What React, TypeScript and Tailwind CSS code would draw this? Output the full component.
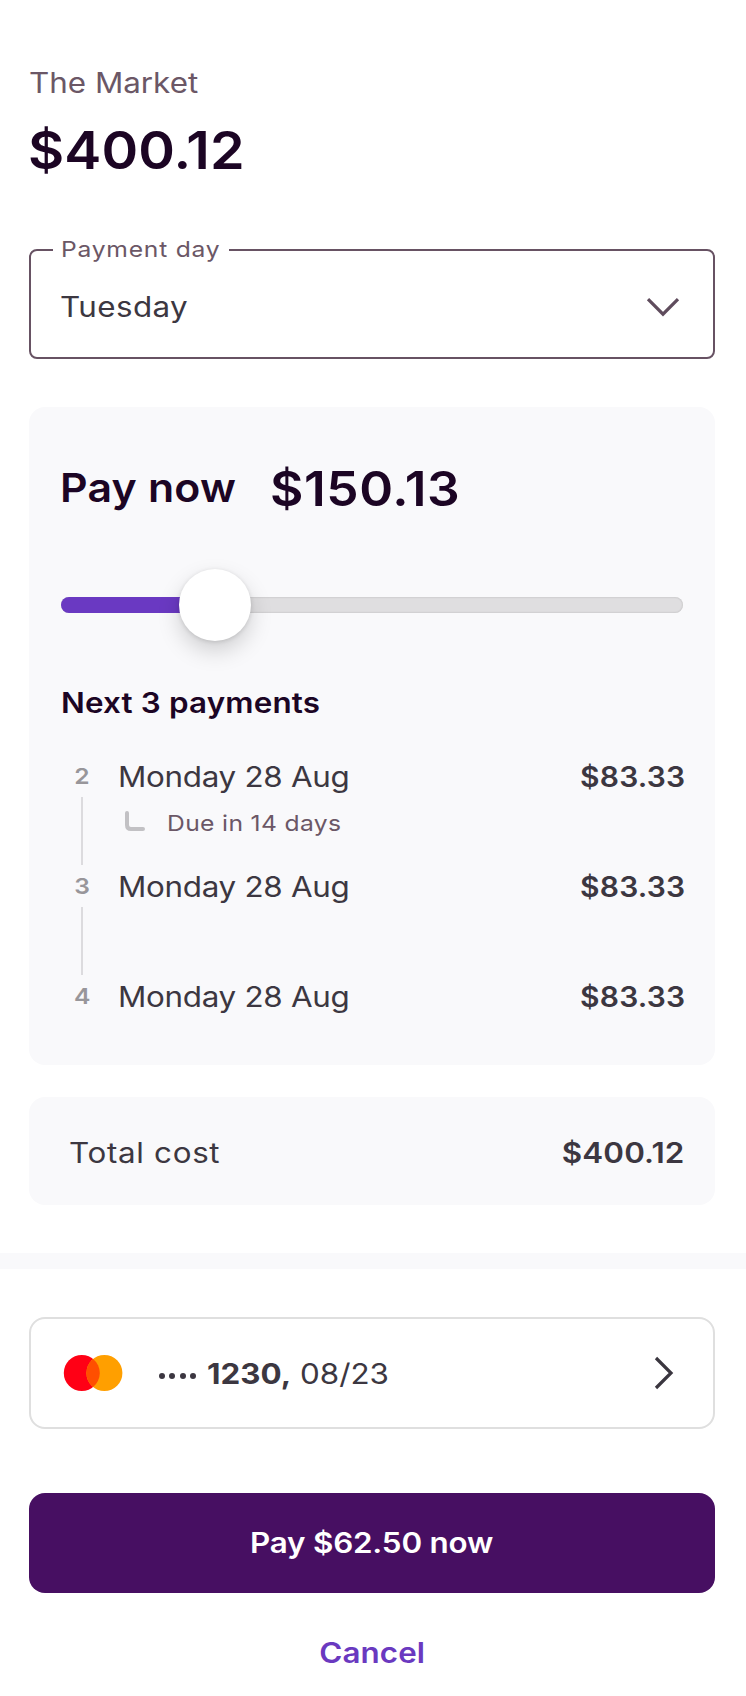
import type { ReactNode } from "react";

type TextProps = { className: string; children: ReactNode };

/* Inter, extended to give the wide grotesque look of the brand face. */
function Wide({ className, children }: TextProps) {
  return (
    <span className={`block origin-left scale-x-[1.12] whitespace-nowrap ${className}`}>{children}</span>
  );
}

/* Large headings and amounts are set a little narrower. */
function Display({ className, children }: TextProps) {
  return (
    <span className={`block origin-left scale-x-[1.07] whitespace-nowrap ${className}`}>{children}</span>
  );
}

function Header() {
  return (
    <header className="pt-[63px]">
      <div className="-ml-[0.5px]">
        <Wide className="text-[28px] leading-10 tracking-[0px] text-[#6b5766]">The Market</Wide>
      </div>
      <h1 className="-ml-px mt-[16px]">
        <Display className="text-[52px] font-semibold leading-[64px] tracking-[0.08px] text-[#1c0524]">$400.12</Display>
      </h1>
    </header>
  );
}

function DaySelect() {
  return (
    <div className="relative mt-[66px] flex h-[110px] items-center justify-between rounded-lg border-2 border-[#675263] pl-[29px] pr-[33px]">
      <div className="absolute -top-4 left-[22px] h-7 w-[176px] bg-white pl-[7.5px]">
        <Wide className="text-[22px] leading-7 tracking-[0.68px] text-[#6b5766]">Payment day</Wide>
      </div>
      <Wide className="mt-1.5 text-[28px] leading-10 tracking-[0.35px] text-[#3c3741]">Tuesday</Wide>
      <svg className="mt-[5px] h-5 w-[34px]" viewBox="0 0 34 20" fill="none" stroke="#5f4c5d" strokeWidth="3.2">
        <path d="M2 2.2 17 17.2 32 2.2" />
      </svg>
    </div>
  );
}

function Slider() {
  return (
    <div className="relative mt-[81px] h-4 w-[622px] rounded-full bg-[#dfdee0] shadow-[inset_0_0_2px_rgba(0,0,0,0.22)]">
      <div className="h-4 w-[154px] rounded-l-full bg-[#6a39c2]" />
      <div className="absolute -top-7 left-[118px] size-[72px] rounded-full bg-white shadow-[0_1px_4px_rgba(0,0,0,0.13),0_10px_22px_rgba(0,0,0,0.17)]" />
    </div>
  );
}

const payments = [
  { step: 2, date: "Monday 28 Aug", amount: "$83.33", due: "Due in 14 days" },
  { step: 3, date: "Monday 28 Aug", amount: "$83.33", due: null },
  { step: 4, date: "Monday 28 Aug", amount: "$83.33", due: null },
];

function Schedule() {
  return (
    <ol className="mt-[34px]">
      {payments.map((p, i) => (
        <li key={p.step} className="flex h-[110px] items-start">
          <div className="flex w-[42px] flex-col items-center">
            <span className="scale-x-[1.12] text-[22px] font-semibold leading-[38px] text-[#98969a]">{p.step}</span>
            {i < payments.length - 1 && <span className="mt-0.5 h-[68px] w-0.5 bg-[#dcdbde]" />}
          </div>
          <div className="ml-[15px]">
            <Wide className="text-[28px] leading-10 tracking-[-0.25px] text-[#3c3741]">{p.date}</Wide>
            {p.due && (
              <div className="mt-[12px] flex pl-[7px]">
                <svg className="mt-[2px] size-5" viewBox="0 0 20 20" fill="none" stroke="#c2c1c4" strokeWidth="4" strokeLinecap="round">
                  <path d="M2 2v12q0 4 4 4h12" />
                </svg>
                <div className="ml-[21.5px]">
                  <Wide className="text-[22px] leading-7 tracking-[0.32px] text-[#6b5766]">{p.due}</Wide>
                </div>
              </div>
            )}
          </div>
          <span className="ml-auto mr-[-2px] origin-right scale-x-[1.07] text-[28px] font-semibold leading-10 tracking-[0.18px] text-[#3c3741]">
            {p.amount}
          </span>
        </li>
      ))}
    </ol>
  );
}

function PayCard() {
  return (
    <section className="mt-12 h-[658px] rounded-2xl bg-[#f9f9fb] px-8 pt-[53px]">
      <div className="-ml-px flex h-14 items-center">
        <div className="w-[210px]">
          <Display className="text-[40px] font-semibold leading-[56px] tracking-[0.2px] text-[#1c0524]">Pay now</Display>
        </div>
        <Display className="mt-[2px] text-[48px] font-semibold leading-[56px] tracking-[0.57px] text-[#1c0524]">$150.13</Display>
      </div>
      <Slider />
      <h2 className="mt-[70px]">
        <Wide className="-ml-[0.5px] text-[28px] font-semibold leading-10 tracking-[0.15px] text-[#1c0524]">Next 3 payments</Wide>
      </h2>
      <Schedule />
    </section>
  );
}

function Total() {
  return (
    <section className="mt-8 flex h-[108px] items-center justify-between rounded-2xl bg-[#f9f9fb] pl-[39.5px] pr-[31px] pt-1">
      <Wide className="text-[28px] leading-10 tracking-[0.6px] text-[#3c3741]">Total cost</Wide>
      <span className="origin-right scale-x-[1.12] text-[28px] font-semibold leading-10 tracking-[0.1px] text-[#3c3741]">$400.12</span>
    </section>
  );
}

function CardRow() {
  return (
    <div className="mt-12 flex h-28 items-center rounded-2xl border-2 border-[#dfdfdf] pl-8">
      <svg className="h-9 w-[60px]" viewBox="0 0 60 36">
        <circle cx="18.8" cy="18" r="18" fill="#ff0015" />
        <circle cx="41.4" cy="18" r="18" fill="#ff9f00" />
        <path d="M30.1 4A18 18 0 0 1 30.1 32A18 18 0 0 1 30.1 4Z" fill="#ff4f00" />
      </svg>
      <div className="ml-9 mt-1.5 flex gap-1">
        <span className="size-1.5 rounded-full bg-[#3c3741]" />
        <span className="ml-[0.4px] size-1.5 rounded-full bg-[#3c3741]" />
        <span className="ml-[0.4px] size-1.5 rounded-full bg-[#3c3741]" />
        <span className="ml-[0.4px] size-1.5 rounded-full bg-[#3c3741]" />
      </div>
      <div className="ml-[11px] w-[92.5px]">
        <Wide className="mt-0.5 text-[28px] font-bold leading-10 tracking-[0px] text-[#3c3741]">1230,</Wide>
      </div>
      <Wide className="mt-0.5 text-[28px] leading-10 tracking-[0px] text-[#3c3741]">08/23</Wide>
      <svg className="ml-auto mr-[39px] h-[34px] w-5" viewBox="0 0 20 34" fill="none" stroke="#3a363f" strokeWidth="3.2">
        <path d="M2 2 17 17 2 32" />
      </svg>
    </div>
  );
}

export default function App() {
  return (
    <main className="h-[1696px] w-[746px] overflow-hidden bg-white font-[Inter,sans-serif]">
      <div className="pl-[29px] pr-[31px]">
        <Header />
        <DaySelect />
        <PayCard />
        <Total />
      </div>
      <div className="mt-12 h-4 bg-[#f9f9fb]" />
      <div className="pl-[29px] pr-[31px]">
        <CardRow />
        <button className="mt-16 flex h-[100px] w-full items-center justify-center rounded-2xl bg-[#470f62] text-[28px] font-semibold leading-10 tracking-[-0.18px] text-white">
          <span className="scale-x-[1.12]">Pay $62.50 now</span>
        </button>
        <button className="mt-10 flex h-10 w-full items-center justify-center text-[28px] font-semibold leading-10 tracking-[0.06px] text-[#6a39c0]">
          <span className="scale-x-[1.12]">Cancel</span>
        </button>
      </div>
    </main>
  );
}
